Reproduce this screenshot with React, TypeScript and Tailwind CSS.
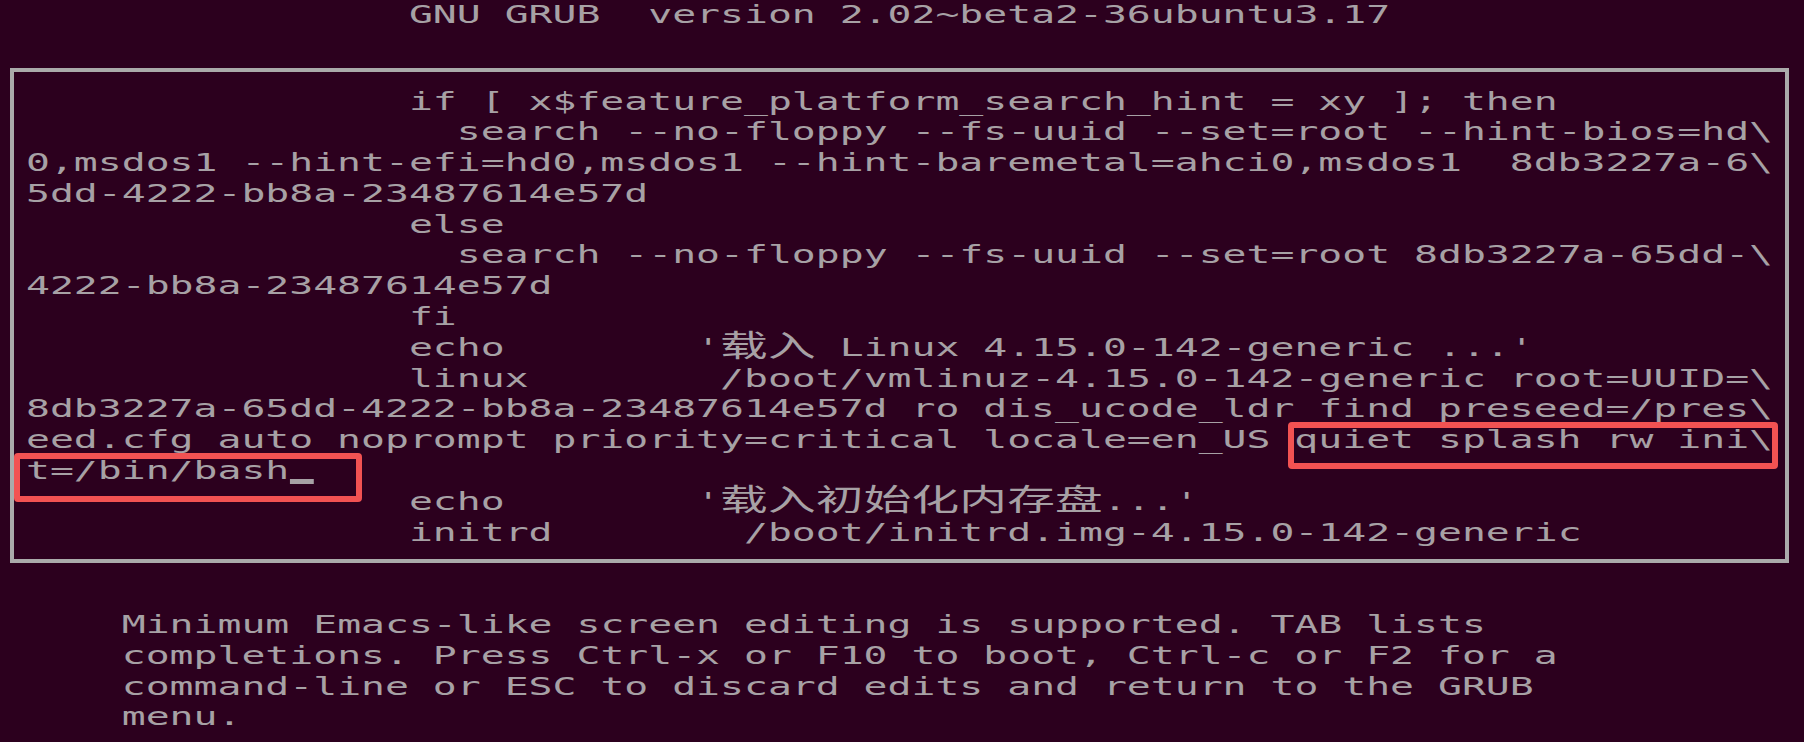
import type { ReactNode } from "react";

// one terminal cell = 15.05px DejaVu Sans Mono advance, stretched to ~23.93px
function Row({ children }: { children: ReactNode }) {
	return (
		<div className="h-[30.8px] leading-[30.8px] whitespace-pre">
			<div className="w-fit origin-left scale-x-[1.59]">{children}</div>
		</div>
	);
}

function Cjk({ text }: { text: string }) {
	return (
		<>
			{Array.from(text).map((ch, i) => (
				<span
					key={i}
					className="inline-block w-[30.1px] text-[30px] leading-[20px] font-['Noto_Sans_CJK_SC',sans-serif]"
				>
					{ch}
				</span>
			))}
		</>
	);
}

const pad = (n: number) => " ".repeat(n);

export default function App() {
	return (
		<div className="h-[742px] w-full overflow-hidden bg-[#2c001e] text-[#a7a1a5] text-[25px] font-['DejaVu_Sans_Mono',monospace]">
			<div className="h-[24px] pl-[26px] leading-[29px] whitespace-pre">
				<div className="w-fit origin-left scale-x-[1.59]">
					{pad(16)}GNU GRUB  version 2.02~beta2-36ubuntu3.17
				</div>
			</div>

			<div className="relative mt-[44px] ml-[10px] w-[1779px] border-4 border-[#aaaaaa] pt-[14.5px] pb-[10.5px] pl-[12px]">
				<Row>{pad(16)}if [ x$feature_platform_search_hint = xy ]; then</Row>
				<Row>{pad(18)}search --no-floppy --fs-uuid --set=root --hint-bios=hd\</Row>
				<Row>0,msdos1 --hint-efi=hd0,msdos1 --hint-baremetal=ahci0,msdos1  8db3227a-6\</Row>
				<Row>5dd-4222-bb8a-23487614e57d</Row>
				<Row>{pad(16)}else</Row>
				<Row>{pad(18)}search --no-floppy --fs-uuid --set=root 8db3227a-65dd-\</Row>
				<Row>4222-bb8a-23487614e57d</Row>
				<Row>{pad(16)}fi</Row>
				<Row>
					{pad(16)}echo{pad(8)}'<Cjk text="载入" /> Linux 4.15.0-142-generic ...'
				</Row>
				<Row>{pad(16)}linux{pad(8)}/boot/vmlinuz-4.15.0-142-generic root=UUID=\</Row>
				<Row>8db3227a-65dd-4222-bb8a-23487614e57d ro dis_ucode_ldr find_preseed=/pres\</Row>
				<Row>eed.cfg auto noprompt priority=critical locale=en_US quiet splash rw ini\</Row>
				<Row>
					t=/bin/bash
					<span className="inline-block h-[5px] w-[15.05px] bg-[#a7a1a5] align-[-5px]" />
				</Row>
				<Row>
					{pad(16)}echo{pad(8)}'<Cjk text="载入初始化内存盘" />...'
				</Row>
				<Row>{pad(16)}initrd{pad(8)}/boot/initrd.img-4.15.0-142-generic</Row>

				{/* annotation boxes */}
				<div className="absolute left-0 top-[381px] h-[49px] w-[348px] rounded-[4px] border-[6px] border-[#f25252]" />
				<div className="absolute left-[1274px] top-[350px] h-[47px] w-[490px] rounded-[4px] border-[6px] border-[#f25252]" />
			</div>

			<div className="mt-[47px] pl-[26px]">
				<Row>{pad(4)}Minimum Emacs-like screen editing is supported. TAB lists</Row>
				<Row>{pad(4)}completions. Press Ctrl-x or F10 to boot, Ctrl-c or F2 for a</Row>
				<Row>{pad(4)}command-line or ESC to discard edits and return to the GRUB</Row>
				<Row>{pad(4)}menu.</Row>
			</div>
		</div>
	);
}
